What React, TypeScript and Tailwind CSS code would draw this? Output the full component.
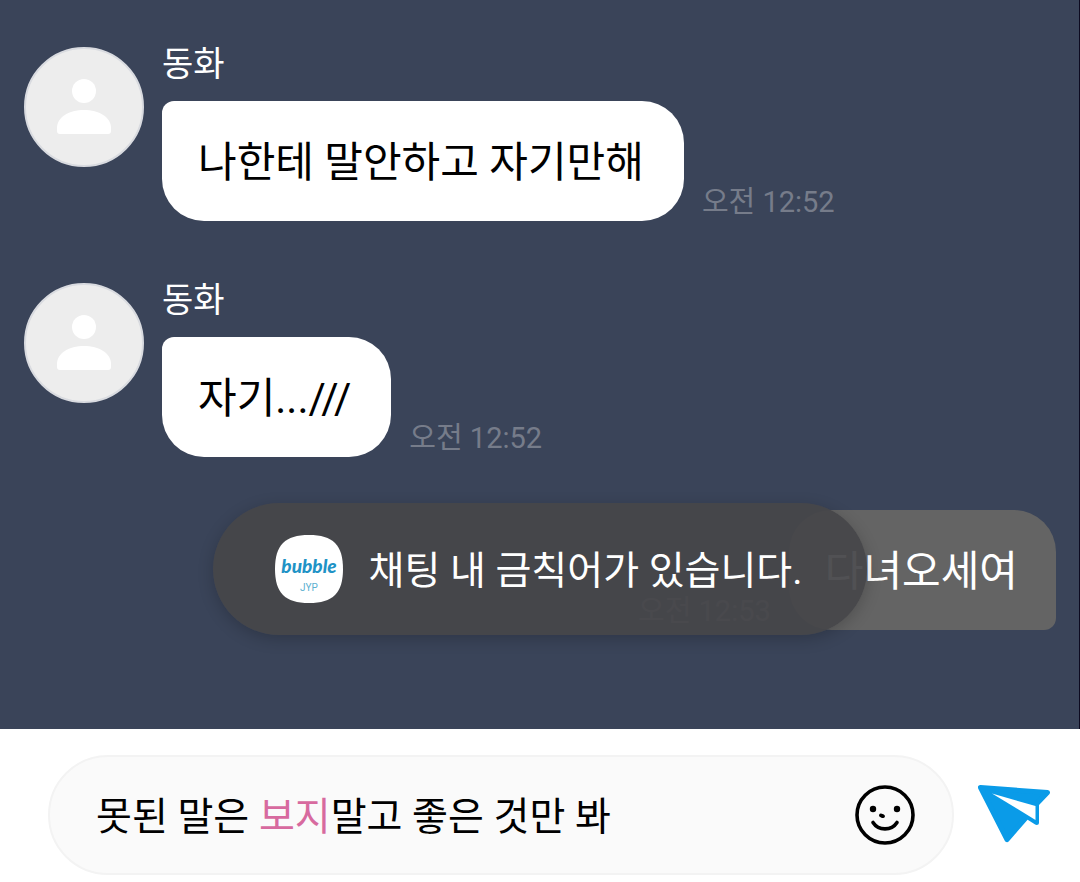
import React, { useState } from 'react';

type Message = {
  id: number;
  name: string;
  text: string;
  time: string;
};

const BANNED = '보지';

const messages: Message[] = [
  { id: 1, name: '동화', text: '나한테 말안하고 자기만해', time: '오전 12:52' },
  { id: 2, name: '동화', text: '자기...///', time: '오전 12:52' },
];

const Avatar: React.FC = () => (
  <div className="size-[120px] shrink-0 rounded-full border-2 border-[#d9dbe0] bg-[#ededed]">
    <svg viewBox="0 0 116 116" className="size-full" fill="#fff" aria-hidden="true">
      <circle cx="58" cy="42" r="12" />
      <path d="M31 79c0-11 12-18 27-18s27 7 27 18v3q0 3-3 3H34q-3 0-3-3z" />
    </svg>
  </div>
);

const Time: React.FC<{ children: string }> = ({ children }) => (
  <time className="pb-0.5 text-[29px] leading-[34px] whitespace-nowrap text-[#767c8a]">{children}</time>
);

const Received: React.FC<{ message: Message }> = ({ message }) => (
  <li className="flex items-start gap-[18px]">
    <Avatar />
    <div>
      <div className="h-[54px] text-[34px] leading-[34px] text-white">{message.name}</div>
      <div className="flex items-end gap-[18px]">
        <p className="rounded-[42px] rounded-tl-[12px] bg-white pt-8 pr-10 pb-7 pl-9 text-[42px] leading-[60px] text-black">
          {message.text}
        </p>
        <Time>{message.time}</Time>
      </div>
    </div>
  </li>
);

const Toast: React.FC = () => (
  <div className="absolute inset-x-0 bottom-[94px] flex justify-center">
    <div
      role="status"
      className="flex h-[132px] items-center gap-[26px] rounded-full bg-[#464649]/94 pr-16 pl-[62px] shadow-[0_4px_16px_rgba(0,0,0,0.2)]"
    >
      <svg viewBox="0 0 68 68" className="size-[68px] shrink-0" aria-hidden="true">
        <path d="M34 0C58 0 68 10 68 34S58 68 34 68 0 58 0 34 10 0 34 0z" fill="#fff" />
        <text x="34" y="38" textAnchor="middle" fill="#1f93c6" className="font-[Lato] text-[19px] font-black italic">
          bubble
        </text>
        <text x="34" y="56" textAnchor="middle" fill="#5bb0d0" className="font-['Liberation_Sans_Narrow',Roboto] text-[10px]">
          JYP
        </text>
      </svg>
      <span className="pt-1 text-[39px] leading-[56px] whitespace-nowrap text-white">채팅 내 금칙어가 있습니다.</span>
    </div>
  </div>
);

const Composer: React.FC = () => {
  const [draft, setDraft] = useState('못된 말은 보지말고 좋은 것만 봐');
  const parts = draft.split(BANNED);

  return (
    <form className="flex items-center gap-6 bg-white pt-[26px] pr-[29px] pb-[7px] pl-12" onSubmit={(e) => e.preventDefault()}>
      <div className="flex h-[120px] min-w-0 flex-1 items-center rounded-full border-2 border-[#f3f3f3] bg-[#fafafa] pr-[37px] pl-[46px]">
        {/* the input's own text is transparent, the layer below paints banned words */}
        <div className="grid min-w-0 flex-1 pt-1 text-[39px] leading-[56px]">
          <div aria-hidden="true" className="col-start-1 row-start-1 overflow-hidden whitespace-pre text-black">
            {parts.map((part, i) => (
              <React.Fragment key={i}>
                {i > 0 && <span className="text-[#d76a9f]">{BANNED}</span>}
                {part}
              </React.Fragment>
            ))}
          </div>
          <input
            type="text"
            aria-label="메시지"
            value={draft}
            onChange={(e) => setDraft(e.target.value)}
            className="col-start-1 row-start-1 w-full min-w-0 bg-transparent text-transparent caret-black outline-none"
          />
        </div>
        <button type="button" aria-label="이모티콘" className="size-[60px] shrink-0">
          <svg viewBox="0 0 60 60" fill="none" stroke="#000" strokeWidth="3.6" strokeLinecap="round">
            <circle cx="30" cy="30" r="28" />
            <path d="M18 37.500c5.500 8.500 18.500 8.500 24 0" />
            <g fill="#000" stroke="none">
              <circle cx="18" cy="24" r="3.200" />
              <circle cx="42" cy="24" r="3.200" />
              <ellipse cx="27" cy="30.800" rx="3" ry="2" transform="rotate(18 27 30.800)" />
            </g>
          </svg>
        </button>
      </div>
      <button type="submit" aria-label="보내기" className="shrink-0">
        <svg viewBox="0 0 73 60" className="h-[60px] w-[73px]">
          <path
            d="M2.500 2.500L69.500 7.500 58.500 19V37.500L49 31.500 29 54.500z"
            fill="#0a9be8"
            stroke="#0a9be8"
            strokeWidth="5"
            strokeLinejoin="round"
          />
          <path d="M14 8.500L57.500 21V35z" fill="#fff" />
        </svg>
      </button>
    </form>
  );
};

const App: React.FC = () => {
  return (
    <div className="min-h-screen bg-white font-[Roboto,'Noto_Sans_CJK_KR',sans-serif]">
      <main className="relative border-r border-[#0d0a20] bg-[#3a4459] px-6 pt-[47px] pb-[99px]">
        <ul className="flex flex-col gap-[62px]">
          {messages.map((message) => (
            <Received key={message.id} message={message} />
          ))}
        </ul>
        <div className="mt-[53px] -mr-px flex items-end justify-end gap-[18px]">
          <Time>오전 12:53</Time>
          <p className="rounded-[42px] rounded-br-[12px] bg-[#646464] pt-8 pr-[38px] pb-7 pl-9 text-[42px] leading-[60px] text-white">
            다녀오세여
          </p>
        </div>
        <Toast />
      </main>
      <Composer />
    </div>
  );
};

export default App;
